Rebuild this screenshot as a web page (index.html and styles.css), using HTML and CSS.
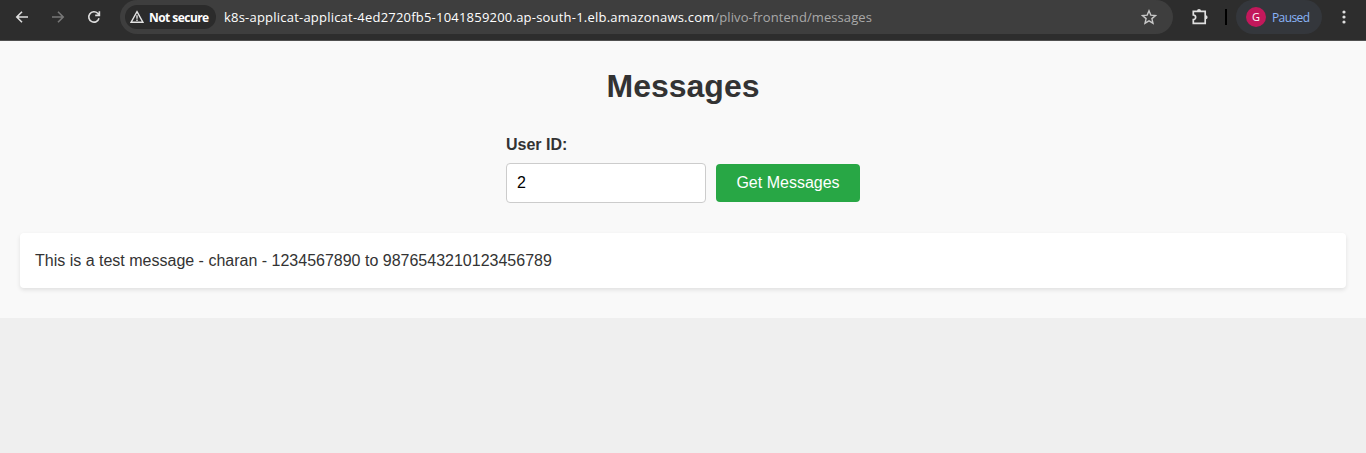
FILE: index.html
```html
<!DOCTYPE html>
<html lang="en">
<head>
<meta charset="utf-8">
<title>Messages</title>
<link rel="stylesheet" href="styles.css">
</head>
<body>
<header class="toolbar">
  <nav class="nav">
    <svg class="icon" viewBox="0 0 16 16"><path d="M14 8H3M8 2.8 2.8 8 8 13.2"/></svg>
    <svg class="icon icon-disabled" viewBox="0 0 16 16"><path d="M2 8h11M8 2.8 13.2 8 8 13.2"/></svg>
    <svg class="icon" viewBox="0 0 16 16"><path d="M13 9.3A5.2 5.2 0 1 1 11.7 4.3L13.4 6M13.4 2.2v4.2H9.2"/></svg>
  </nav>
  <div class="address">
    <div class="chip">
      <svg class="warn" viewBox="0 0 14 14"><path d="M7 1.7 13 12.3H1Z"/><path d="M7 5.3v3.4M7 9.5v1.4"/></svg>
      <span class="chip-text">Not secure</span>
    </div>
    <div class="url"><span class="host">k8s-applicat-applicat-4ed2720fb5-1041859200.ap-south-1.elb.amazonaws.com</span><span class="path">/plivo-frontend/messages</span></div>
    <svg class="star" viewBox="0 0 16 16"><path d="m8 1.8 1.8 4.3 4.7.4-3.6 3.1 1.1 4.6L8 11.8l-4 2.4 1.1-4.6L1.5 6.5l4.7-.4Z"/></svg>
  </div>
  <svg class="puzzle" viewBox="0 0 18 18"><path d="M2.3 3.3h11.9v12H2.3v-3.6a2.3 2.3 0 0 0 0-4.7Z"/><path class="puzzle-tabs" d="M6 3a2 2 0 0 1 4 0ZM14.6 7.2a2 2 0 0 1 0 4Z"/></svg>
  <span class="divider"></span>
  <div class="profile"><span class="avatar">G</span><span class="paused">Paused</span></div>
  <svg class="dots" viewBox="0 0 4 16"><circle cx="2" cy="3" r="1.6"/><circle cx="2" cy="8" r="1.6"/><circle cx="2" cy="13" r="1.6"/></svg>
</header>
<main class="page">
  <h1 class="title">Messages</h1>
  <form class="form">
    <label class="label" for="user">User ID:</label>
    <div class="row">
      <input class="input" id="user" type="text" value="2">
      <button class="button" type="button">Get Messages</button>
    </div>
  </form>
  <div class="message">This is a test message - charan - 1234567890 to 9876543210123456789</div>
</main>
</body>
</html>
```
FILE: styles.css
```css
* { box-sizing: border-box; }
body {
  margin: 0;
  height: 453px;
  overflow: hidden;
  background: #efefef;
  color: #333;
  font: 16px "Liberation Sans", Arial, sans-serif;
}
.toolbar {
  display: flex;
  align-items: center;
  height: 41px;
  padding-bottom: 6px;
  background: #2d2d2d;
  border-bottom: 1px solid #505050;
  font-family: "Open Sans", "Noto Sans", sans-serif;
}
svg { flex: none; fill: none; }
.nav { display: flex; gap: 20px; width: 120px; padding-left: 14px; }
.icon { width: 16px; height: 16px; stroke: #dedede; stroke-width: 1.6; }
.icon-disabled { stroke: #777; }
.address {
  display: flex;
  align-items: center;
  width: 1053px;
  height: 34px;
  padding: 0 16px 0 5px;
  background: #3e3e3e;
  border-radius: 17px;
}
.chip {
  display: flex;
  align-items: center;
  width: 91px;
  height: 24px;
  padding-left: 5px;
  background: #2b2b2b;
  border-radius: 12px;
}
.warn { width: 14px; height: 14px; margin-right: 5px; stroke: #e3e3e3; stroke-width: 1.4; }
.chip-text { color: #fff; font-size: 12px; font-weight: 700; letter-spacing: -0.55px; white-space: nowrap; }
.url { flex: 1; margin-left: 8px; font-size: 13px; white-space: nowrap; }
.host { color: #fff; letter-spacing: 0.215px; }
.path { color: #a9a9a9; letter-spacing: 0.09px; }
.star { width: 16px; height: 16px; stroke: #c7c7c7; stroke-width: 1.4; }
.puzzle { width: 18px; height: 18px; margin-left: 18px; stroke: #e0e0e0; stroke-width: 1.7; }
.puzzle-tabs { fill: #e0e0e0; stroke: none; }
.divider { width: 2px; height: 16px; margin-left: 16px; background: #000; }
.profile {
  display: flex;
  align-items: center;
  gap: 6px;
  width: 86px;
  height: 34px;
  margin-left: 9px;
  padding-left: 10px;
  background: #34373c;
  border-radius: 17px;
}
.avatar {
  width: 20px;
  height: 20px;
  background: #c2185b;
  border-radius: 50%;
  color: #fff;
  font-size: 11px;
  line-height: 20px;
  text-align: center;
}
.paused { color: #8ab4f8; font-size: 12px; letter-spacing: -0.6px; }
.dots { width: 4px; height: 16px; margin-left: 20px; fill: #dedede; }
.page { height: 277px; padding: 20px; background: #f9f9f9; }
.title { margin: 7px 0 31px; font-size: 32px; line-height: 37px; text-align: center; }
.form { width: 354px; margin: 0 auto 30px; }
.label { display: block; margin-bottom: 9px; font-weight: 700; line-height: 18px; }
.row { display: flex; align-items: center; gap: 10px; }
.input {
  width: 200px;
  height: 40px;
  padding: 10px;
  border: 1px solid #ccc;
  border-radius: 4px;
  background: #fff;
  color: #000;
  font: inherit;
}
.button {
  width: 144px;
  height: 38px;
  padding: 0;
  border: 0;
  border-radius: 4px;
  background: #28a745;
  color: #fff;
  font: inherit;
}
.message {
  height: 55px;
  padding: 0 15px;
  border-radius: 4px;
  background: #fff;
  box-shadow: 0 2px 4px rgba(0, 0, 0, .1);
  line-height: 55px;
}
```
